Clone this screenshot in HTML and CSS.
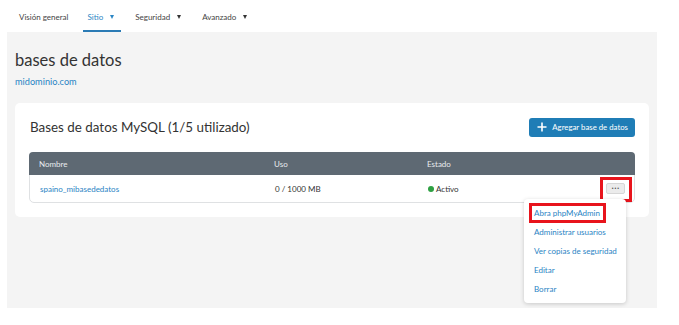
FILE: index.html
```html
<!DOCTYPE html>
<html lang="es">
<head>
<meta charset="utf-8">
<title>bases de datos</title>
<link rel="stylesheet" href="styles.css">
</head>
<body>
<nav class="tabs">
  <a class="tab">Visión general</a>
  <a class="tab active">Sitio<span class="caret"></span></a>
  <a class="tab">Seguridad<span class="caret"></span></a>
  <a class="tab">Avanzado<span class="caret"></span></a>
</nav>
<main class="page">
  <h1 class="title">bases de datos</h1>
  <a class="domain">midominio.com</a>
  <section class="card">
    <div class="card-head">
      <h2 class="card-title">Bases de datos MySQL (1/5 utilizado)</h2>
      <button class="btn-add"><svg class="plus" viewBox="0 0 10 10" width="10" height="10"><path d="M5 0.5V9.5M0.5 5H9.5" stroke="#fff" stroke-width="1.6"/></svg>Agregar base de datos</button>
    </div>
    <div class="table">
      <div class="thead">
        <div class="c1">Nombre</div>
        <div class="c2">Uso</div>
        <div class="c3">Estado</div>
        <div class="c4"></div>
      </div>
      <div class="trow">
        <div class="c1"><a class="dbname">spaino_mibasededatos</a></div>
        <div class="c2">0 / 1000 MB</div>
        <div class="c3"><span class="dot"></span>Activo</div>
        <div class="c4">
          <div class="more-wrap">
            <button class="more">•••</button>
            <span class="mark mark-more"></span>
            <ul class="menu">
              <li class="hl">Abra phpMyAdmin<span class="mark mark-item"></span></li>
              <li>Administrar usuarios</li>
              <li>Ver copias de seguridad</li>
              <li>Editar</li>
              <li>Borrar</li>
            </ul>
          </div>
        </div>
      </div>
    </div>
  </section>
</main>
</body>
</html>
```
FILE: styles.css
```css
* { box-sizing: border-box; }
body {
  margin: 0;
  background: #fff;
  font-family: "Lato", "Noto Sans", sans-serif;
  color: #333;
}
.tabs {
  display: flex;
  height: 32px;
  padding-left: 14px;
  align-items: stretch;
}
.tab {
  display: flex;
  align-items: center;
  padding: 4px 5px 0 5px;
  margin-right: 9px;
  font-size: 8px;
  color: #444;
  border-bottom: 2px solid transparent;
  height: 32px;
}
.tab.active {
  color: #2b86c5;
  border-bottom-color: #2b7bb5;
}
.caret {
  width: 0;
  height: 0;
  border-left: 2.5px solid transparent;
  border-right: 2.5px solid transparent;
  border-top: 4px solid #333;
  margin-left: 7px;
  margin-right: 2px;
}
.tab.active .caret { border-top-color: #2b86c5; }
.page {
  margin: 0 22px 0 7px;
  background: #f4f4f4;
  height: 276px;
  padding: 18px 8px 0 8px;
}
.title {
  margin: 0;
  font-size: 16.5px;
  font-weight: 400;
  color: #333;
  line-height: 20px;
}
.domain {
  display: block;
  margin-top: 6px;
  font-size: 9.2px;
  color: #2a84c4;
  line-height: 12px;
}
.card {
  margin-top: 15px;
  background: #fff;
  border-radius: 5px;
  padding: 14px 14px 14px 14px;
  height: 114px;
}
.card-head {
  display: flex;
  justify-content: space-between;
  align-items: center;
  margin-bottom: 15px;
  height: 20px;
}
.card-title {
  margin: 0;
  font-size: 13.4px;
  font-weight: 400;
  color: #333;
  padding-left: 1px;
}
.btn-add {
  display: flex;
  align-items: center;
  height: 19px;
  padding: 0 7px 0 8px;
  border: none;
  border-radius: 3px;
  background: #1f7db6;
  color: #fff;
  font-family: inherit;
  font-size: 7.8px;
}
.plus { margin-right: 5px; }
.table {
  border: 1px solid #dfe1e3;
  border-radius: 5px;
}
.thead, .trow {
  display: grid;
  grid-template-columns: 245px 153px 1fr 40px;
  align-items: center;
  font-size: 8px;
}
.thead {
  height: 23px;
  background: #5e6973;
  color: #e8ebee;
  border-radius: 4px 4px 0 0;
  margin: -1px -1px 0 -1px;
}
.trow {
  height: 27px;
  color: #333;
}
.c1 { padding-left: 10px; }
.dbname { color: #2a84c4; }
.dot {
  display: inline-block;
  width: 6px;
  height: 6px;
  border-radius: 50%;
  background: #2ea043;
  margin-right: 2px;
  vertical-align: -0.5px;
}
.c4 { display: flex; justify-content: flex-end; padding-right: 9px; }
.more-wrap { position: relative; }
.more {
  display: block;
  width: 19px;
  height: 11px;
  padding: 0 0 0 1px;
  border: 1px solid #d6d6d6;
  border-radius: 2px;
  background: #ebebeb;
  color: #555;
  font-size: 5px;
  letter-spacing: 1px;
  line-height: 9px;
}
.mark {
  position: absolute;
  border: 3px solid #e8141c;
}
.mark-more {
  left: -6px;
  top: -6px;
  width: 32px;
  height: 25px;
}
.menu {
  position: absolute;
  left: -82px;
  top: 16px;
  width: 102px;
  margin: 0;
  padding: 5px 0 4px 0;
  list-style: none;
  background: #fff;
  border-radius: 4px;
  box-shadow: 0 1px 4px rgba(0,0,0,0.18);
  font-size: 8px;
  color: #2a84c4;
  white-space: nowrap;
  z-index: 2;
}
.menu li {
  position: relative;
  height: 19px;
  line-height: 19px;
  padding-left: 10px;
}
.mark-item {
  left: 5px;
  top: -1px;
  width: 77px;
  height: 20px;
}
```
